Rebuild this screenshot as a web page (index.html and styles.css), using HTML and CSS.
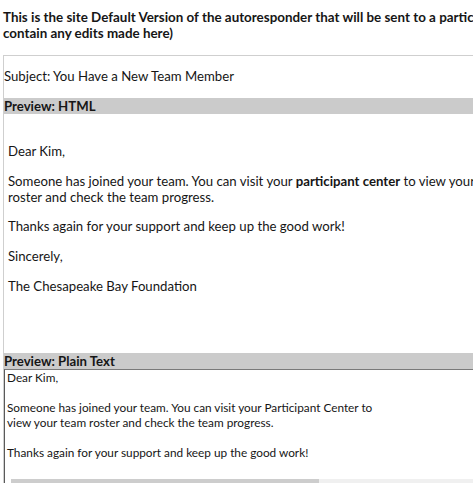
FILE: index.html
```html
<!DOCTYPE html>
<html lang="en">
<head>
	<meta charset="UTF-8">
	<title>Autoresponder Preview</title>
	<link rel="stylesheet" href="styles.css">
</head>
<body>
	<div class="page">
		<!-- note -->
		<p class="intro">This is the site Default Version of the autoresponder that will be sent to a participant (team captain versions will not<br>contain any edits made here)</p>

		<div class="template">
			<p class="subject">Subject: You Have a New Team Member</p>

			<!-- html preview -->
			<div class="bar">Preview: HTML</div>
			<div class="preview-html">
				<p>Dear Kim,</p>
				<p>Someone has joined your team. You can visit your <b>participant center</b> to view your team roster and check the team progress.</p>
				<p>Thanks again for your support and keep up the good work!</p>
				<p>Sincerely,</p>
				<p>The Chesapeake Bay Foundation</p>
			</div>

			<!-- plain text preview -->
			<div class="bar">Preview: Plain Text</div>
			<div class="plain">
				<div class="plain-text">Dear Kim,

Someone has joined your team. You can visit your Participant Center to
view your team roster and check the team progress.

Thanks again for your support and keep up the good work!

Sincerely,

The Chesapeake Bay Foundation</div>
				<div class="hscroll"><div class="thumb"></div></div>
			</div>
		</div>
	</div>
</body>
</html>
```

FILE: styles.css
```css
html,body{overflow: hidden;}
body{margin: 0;font-family: Lato, "Open Sans", sans-serif;color: #161616;background: #fff;}
.page{width: 900px;}

.intro{margin: 9px 0 14px 3px;font-size: 13.4px;line-height: 16px;font-weight: bold;}

.template{margin-left: 3px;border-top: 1px solid #cfcfcf;border-left: 1px solid #cfcfcf;}
.subject{margin: 12px 0 14px;font-size: 13.2px;line-height: 16px;}

.bar{background: #cbcbcb;font-size: 13.2px;line-height: 16px;height: 16px;font-weight: bold;}

.preview-html{height: 239px;box-sizing: border-box;padding: 29px 0 0 4px;width: 524px;font-size: 13.2px;line-height: 16px;}
.preview-html p{margin: 0 0 13.7px;}

.plain{border-top: 1px solid #7a7a7a;border-left: 1px solid #5a5a5a;}
.plain-text{height: 105px;overflow: hidden;padding: 0 0 0 2px;box-sizing: border-box;white-space: pre-line;font-size: 11.8px;line-height: 15px;}
.hscroll{margin: 4px 0 0 6px;height: 8px;background: #f0f0f0;}
.hscroll .thumb{width: 308px;height: 8px;background: #cdcdcd;}
```
